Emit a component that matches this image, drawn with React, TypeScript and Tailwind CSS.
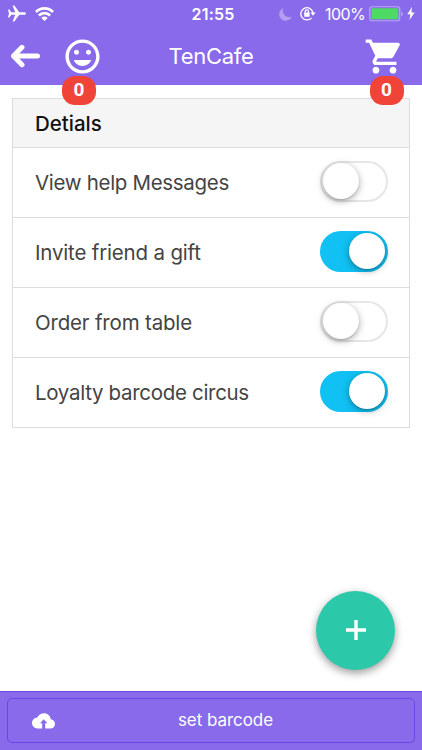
import { useState } from 'react';
import { MdInsertEmoticon, MdShoppingCart } from 'react-icons/md';

interface Setting {
  id: string;
  label: string;
  enabled: boolean;
  tracking: string;
}

const initialSettings: Setting[] = [
  { id: 'help', label: 'View help Messages', enabled: false, tracking: 'tracking-[-0.31px]' },
  { id: 'invite', label: 'Invite friend a gift', enabled: true, tracking: 'tracking-[-0.18px]' },
  { id: 'order', label: 'Order from table', enabled: false, tracking: 'tracking-[-0.18px]' },
  { id: 'loyalty', label: 'Loyalty barcode circus', enabled: true, tracking: 'tracking-[-0.31px]' },
];

function StatusBar() {
  return (
    <div className="flex h-7 items-center text-white">
      <div className="flex flex-1 items-center gap-[9px] pl-2">
        {/* Airplane mode */}
        <svg className="mb-0.5 h-[17px] w-[18px]" viewBox="0 0 18 17" fill="currentColor">
          <path d="M0 4.5h1.3l2 2.7h4L4.6.5h1.7l5 6.7h4.8c1 0 1.9.6 1.9 1.3s-.9 1.3-1.9 1.3h-4.8l-5 6.7H4.6l2.7-6.7h-4l-2 2.7H0l1-4z" />
        </svg>
        {/* Wifi */}
        <svg className="mb-px h-[14px] w-[19px]" viewBox="0 0 19 14" fill="none" stroke="currentColor" strokeWidth="2.7">
          <path d="M1 5a12 12 0 0 1 17 0" />
          <path d="M3.900 8.500a8 8 0 0 1 11.200 0" />
          <path d="M6.300 10.900a4.500 4.500 0 0 1 6.400 0L9.500 14z" fill="currentColor" stroke="none" />
        </svg>
      </div>
      <span className="pl-[3px] text-[16px] font-semibold tracking-[0.2px]">21:55</span>
      <div className="flex flex-1 items-center justify-end pr-[7px]">
        {/* Do not disturb */}
        <svg className="mr-[8px] h-[13px] w-[13px] opacity-35" viewBox="0 0 12 12" fill="currentColor">
          <path d="M3.8.3A6.1 6.1 0 0 0 11.8 8 6 6 0 1 1 3.8.3z" />
        </svg>
        {/* Orientation lock */}
        <svg className="mr-[9px] mb-px h-[15px] w-[16px]" viewBox="0 0 16 15" fill="none" stroke="currentColor" strokeWidth="1.3">
          <path d="M11.6 11.8A6.1 6.1 0 1 1 13 7" />
          <path d="M10.4 6.4h5.2L13 9.8z" fill="currentColor" stroke="none" />
          <rect x="4.2" y="6.6" width="5.4" height="4.2" rx=".6" fill="currentColor" stroke="none" />
          <path d="M5.3 7V5.4a1.6 1.6 0 0 1 3.2 0V7" />
        </svg>
        <span className="text-[16px] tracking-[-0.6px]">100%</span>
        {/* Battery */}
        <svg className="ml-1 h-4 w-[35px]" viewBox="0 0 35 16">
          <rect x=".75" y=".75" width="30" height="14" rx="2.5" fill="none" stroke="#b9a7f5" strokeWidth="1.2" />
          <rect x="2.3" y="2.3" width="27" height="11" rx="1" fill="#4cd964" />
          <path d="M32.3 5.4c2 .8 2 4 0 4.8z" fill="#b9a7f5" />
        </svg>
        <svg className="ml-[3px] mb-px h-[13px] w-2" viewBox="0 0 8 13" fill="currentColor">
          <path d="M5 0 .3 7.2h3L2.5 13 7.6 5.4H4.5z" />
        </svg>
      </div>
    </div>
  );
}

function CountBadge({ count }: { count: number }) {
  return (
    <span className="absolute top-[41.5px] left-1/2 flex h-[29.5px] w-[34px] -translate-x-1/2 items-center justify-center rounded-[13px] bg-[#f04438] font-['Roboto','Liberation_Sans',sans-serif] text-[19px] font-bold text-white">
      {count}
    </span>
  );
}

function Toggle({ checked, onChange }: { checked: boolean; onChange: () => void }) {
  return (
    <button
      role="switch"
      aria-checked={checked}
      onClick={onChange}
      className={`mb-[2px] flex h-[41px] w-[68px] rounded-full border-[2.5px] px-px ${
        checked ? 'justify-end border-[#11c1f3] bg-[#11c1f3]' : 'justify-start border-[#e6e6e6] bg-white'
      }`}
    >
      <span className="h-9 w-9 rounded-full bg-white shadow-[0_2px_7px_rgba(0,0,0,0.35),0_1px_1px_rgba(0,0,0,0.15)]" />
    </button>
  );
}

export default function App() {
  const [settings, setSettings] = useState(initialSettings);

  const toggleSetting = (id: string) => {
    setSettings(settings.map((s) => (s.id === id ? { ...s, enabled: !s.enabled } : s)));
  };

  return (
    <div className="flex h-[750px] w-[422px] flex-col bg-white font-['Inter','Liberation_Sans',sans-serif]">
      {/* Header */}
      <header className="relative z-10 h-[84.5px] bg-[#886aea]">
        <StatusBar />
        <div className="flex h-[56px] items-center justify-between text-white">
          <div className="flex w-[150px] items-center">
            <button className="ml-[10px]">
              <svg className="h-6 w-[31px]" viewBox="0 0 31 24" fill="none" stroke="currentColor" strokeWidth="5" strokeLinecap="round" strokeLinejoin="round">
                <path d="M27.5 12H4M12 3.3 3.5 12l8.5 8.7" />
              </svg>
            </button>
            <button className="ml-[20.5px]">
              <MdInsertEmoticon className="h-[41px] w-[41px]" />
            </button>
          </div>
          <h1 className="text-[22px] tracking-[-0.3px]">TenCafe</h1>
          <div className="flex w-[150px] justify-end pr-[17px]">
            <button>
              <MdShoppingCart className="h-[41px] w-[41px]" />
            </button>
          </div>
        </div>
        <div className="absolute top-[34px] left-[79px]">
          <CountBadge count={0} />
        </div>
        <div className="absolute top-[34px] left-[386.5px]">
          <CountBadge count={0} />
        </div>
      </header>

      {/* Settings */}
      <main className="flex flex-1 flex-col justify-between">
        <section className="mx-3 mt-[13.5px] border-[1.5px] border-[#dddddd]">
          <h2 className="flex h-12 items-center bg-[#f5f5f5] pt-[3px] pl-[22px] text-[20.5px] font-medium text-[#111111]">
            Detials
          </h2>
          {settings.map((setting) => (
            <div
              key={setting.id}
              className="flex h-[70px] items-center justify-between border-t border-[#dddddd] pr-[21px] pl-[22px]"
            >
              <span className={`pt-0.5 text-[20.5px] text-[#444444] ${setting.tracking}`}>{setting.label}</span>
              <Toggle checked={setting.enabled} onChange={() => toggleSetting(setting.id)} />
            </div>
          ))}
        </section>

        <button className="mr-[27px] mb-[21px] flex h-[79px] w-[79px] items-center justify-center self-end rounded-full bg-[#2bc9aa] text-white shadow-[0_3px_9px_rgba(0,0,0,0.4)]">
          <svg className="mb-px h-5 w-5" viewBox="0 0 20 20" fill="none" stroke="currentColor" strokeWidth="3.4">
            <path d="M10 0v20M0 10h20" />
          </svg>
        </button>
      </main>

      {/* Footer */}
      <footer className="h-[59px] border-t border-[#6b46e5] bg-[#886aea] px-[7px] pt-[6px]">
        <button className="flex h-[45px] w-full items-center rounded-[5px] border border-[#6b46e5] text-white">
          <svg className="ml-6 h-4 w-[23px]" viewBox="0 0 23 16" fill="currentColor">
            <path d="M10.2 15.5V10.2H8l3.7-3.9 3.7 3.9h-2.2v5.3h5.1c2.7 0 4.7-2 4.7-4.6 0-2.5-1.8-4.4-4.3-4.6C18.4 2.8 15.5.3 12 .3 9 .3 6.5 2 5.3 4.6 2.4 4.8 0 7.2 0 10.1c0 3 2.4 5.4 5.4 5.4z" />
          </svg>
          <span className="flex-1 pr-[18px] text-center text-[17px] tracking-[-0.05px]">set barcode</span>
        </button>
      </footer>
    </div>
  );
}
